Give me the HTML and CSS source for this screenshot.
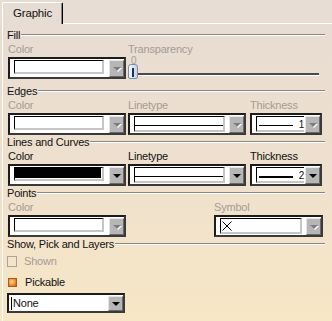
FILE: index.html
```html
<!DOCTYPE html>
<html lang="en">
<head>
    <meta charset="UTF-8">
    <title>Graphic</title>
    <link rel="stylesheet" href="styles.css">
</head>
<body>
<div class="tabs">
    <div class="tab">Graphic</div>
    <div class="tabrest"></div>
</div>
<div class="panel">
    <!-- Fill -->
    <div class="group fill">
        <div class="legend"><span>Fill</span><i></i></div>
        <div class="row">
            <div class="col w1">
                <div class="lbl off">Color</div>
                <div class="combo"><div class="field"></div><div class="btn dis"></div></div>
            </div>
            <div class="col wslide">
                <div class="lbl off">Transparency</div>
                <div class="zero">0</div>
                <div class="track"><div class="thumb"></div><div class="rail"></div></div>
            </div>
        </div>
    </div>
    <!-- Edges -->
    <div class="group">
        <div class="legend"><span>Edges</span><i></i></div>
        <div class="row">
            <div class="col w1">
                <div class="lbl off">Color</div>
                <div class="combo"><div class="field"></div><div class="btn dis"></div></div>
            </div>
            <div class="col w2">
                <div class="lbl off">Linetype</div>
                <div class="combo"><div class="field tall"><div class="ln"></div></div><div class="btn dis"></div></div>
            </div>
            <div class="col w3">
                <div class="lbl off">Thickness</div>
                <div class="combo"><div class="field tall thick"><div class="ln t"></div><span class="num">1</span></div><div class="btn dis"></div></div>
            </div>
        </div>
    </div>
    <!-- Lines and Curves -->
    <div class="group">
        <div class="legend"><span>Lines and Curves</span><i></i></div>
        <div class="row">
            <div class="col w1">
                <div class="lbl">Color</div>
                <div class="combo"><div class="field black"></div><div class="btn"></div></div>
            </div>
            <div class="col w2">
                <div class="lbl">Linetype</div>
                <div class="combo"><div class="field tall"><div class="ln"></div></div><div class="btn"></div></div>
            </div>
            <div class="col w3">
                <div class="lbl">Thickness</div>
                <div class="combo"><div class="field tall thick"><div class="ln t b"></div><span class="num">2</span></div><div class="btn"></div></div>
            </div>
        </div>
    </div>
    <!-- Points -->
    <div class="group">
        <div class="legend"><span>Points</span><i></i></div>
        <div class="row">
            <div class="col w1">
                <div class="lbl off">Color</div>
                <div class="combo"><div class="field"></div><div class="btn dis"></div></div>
            </div>
            <div class="col w4">
                <div class="lbl off">Symbol</div>
                <div class="combo"><div class="field tall">
                    <svg width="11" height="10" viewBox="0 0 11 10"><path d="M0.5 0.5 L9.5 9.5 M9.5 0.5 L0.5 9.5" stroke="#000" stroke-width="1" fill="none"/></svg>
                </div><div class="btn dis"></div></div>
            </div>
        </div>
    </div>
    <!-- Show, Pick and Layers -->
    <div class="group">
        <div class="legend"><span>Show, Pick and Layers</span><i></i></div>
        <div class="check off"><div class="box"></div>Shown</div>
        <div class="check pick"><div class="box on"></div>Pickable</div>
        <div class="combo sel"><div class="val"><span class="caret">None</span></div><div class="btn"></div></div>
    </div>
</div>
</body>
</html>
```
FILE: styles.css
```css
body{
    margin: 0;
    width: 332px;
    height: 321px;
    overflow: hidden;
    background: linear-gradient(#e7dcd4, #efe0cd 55%, #f7e7c6);
    font-family: "Liberation Sans", Arial, sans-serif;
    font-size: 11px;
    letter-spacing: -0.2px;
    color: #111;
}
.tabs{
    display: flex;
    align-items: flex-end;
    height: 24px;
}
.tab{
    margin-left: 2px;
    width: 61px;
    height: 22px;
    box-sizing: border-box;
    border-top: 1px solid #fff;
    border-left: 1px solid #fff;
    border-right: 1px solid #000;
    box-shadow: inset -1px 0 #8a8580;
    border-radius: 2px 2px 0 0;
    text-align: center;
    line-height: 21px;
    font-size: 11.5px;
}
.tabrest{
    flex: 1;
    border-bottom: 1px solid #fff;
}
.panel{
    margin-left: 2px;
    height: 297px;
    box-sizing: border-box;
    border-left: 1px solid #fff;
    padding: 5px 0 0 4px;
}
.group{
    padding-bottom: 1px;
}
.group.fill{
    padding-bottom: 6px;
}
.legend{
    display: flex;
    height: 12px;
    line-height: 12px;
}
.legend i{
    flex: 1;
    height: 0;
    margin: 5px 7px 0 1px;
    border-top: 1px solid #8a8784;
    border-bottom: 1px solid #fff;
}
.row{
    display: flex;
    margin-left: 1px;
}
.col{
    display: flex;
    flex-direction: column;
}
.lbl{
    height: 16px;
    line-height: 12px;
    padding-top: 2px;
    box-sizing: border-box;
}
.off{
    color: #a39c96;
}
.w1{ width: 118px; }
.w2{ width: 118px; margin-left: 2px; }
.w3{ width: 72px; margin-left: 4px; }
.w4{ width: 109px; margin-left: 88px; }
.wslide{ width: 191px; margin-left: 2px; }

.combo{
    display: flex;
    height: 22px;
    box-sizing: border-box;
    border: 2px solid #3a3a3a;
    border-top-color: #1c1c1c;
    border-left-color: #1c1c1c;
    background: #fff;
    padding: 1px 0 0 4px;
}
.field{
    flex: 1;
    min-width: 0;
    height: 14px;
    box-sizing: border-box;
    display: flex;
    align-items: center;
    margin-right: 5px;
    border-top: 1px solid #000;
    border-left: 1px solid #000;
    border-right: 2px solid #c6c6c6;
    border-bottom: 2px solid #c6c6c6;
    background: #fff;
}
.field.tall{
    height: 16px;
    margin-right: 4px;
}
.field.thick{
    margin-right: 1px;
    border-right: none;
}
.field.black{
    background: #000;
    box-shadow: inset -1px -1px #fff;
}
.btn{
    width: 15px;
    display: flex;
    align-items: center;
    justify-content: center;
    background: #b6b6b6;
    border: 1px solid;
    border-color: #e6e6e6 #6a6a6a #6a6a6a #e6e6e6;
    box-sizing: border-box;
}
.btn::before{
    content: "";
    border-left: 4px solid transparent;
    border-right: 4px solid transparent;
    border-top: 4px solid #000;
}
.btn.dis::before{
    border-top-color: #7c7c7c;
    filter: drop-shadow(1px 1px 0 #fff);
}
.ln{
    width: 89px;
    height: 1px;
    background: #000;
    flex-shrink: 0;
    margin: 4px 0 0 -1px;
}
.ln.t{
    width: 34px;
    margin-left: 2px;
}
.ln.b{
    height: 2px;
}
.num{
    margin-left: auto;
    line-height: 11px;
    font-size: 10px;
    margin-top: 1px;
}
.field svg{
    margin: 1px 0 0 1px;
}

.zero{
    height: 7px;
    line-height: 7px;
    font-size: 10px;
    padding-left: 3px;
    color: #a39c96;
}
.track{
    display: flex;
    height: 15px;
}
.thumb{
    width: 10px;
    height: 15px;
    box-sizing: border-box;
    border: 1px solid #7d8ea4;
    border-radius: 3px 3px 2px 2px;
    background: linear-gradient(90deg, #f6f8fb, #c3d2e2);
    display: flex;
    justify-content: center;
}
.thumb::after{
    content: "";
    width: 2px;
    margin: 3px 0 1px;
    background: #1e2f66;
}
.rail{
    flex: 1;
    height: 2px;
    margin-top: 9px;
    background: #4a4a4a;
    border-bottom: 1px solid #fff;
}

.check{
    display: flex;
    align-items: center;
    height: 12px;
    margin-top: 5px;
}
.check.pick{
    margin-top: 9px;
}
.box{
    width: 10px;
    height: 11px;
    box-sizing: border-box;
    border: 1px solid #aaa39c;
    margin-right: 7px;
}
.box.on{
    width: 9px;
    height: 9px;
    margin: 0 8px 0 1px;
    border: 1px solid #b25a12;
    background: radial-gradient(circle at 40% 40%, #fcd9a6, #ec8a2c 60%, #c2600e);
}
.combo.sel{
    width: 118px;
    height: 20px;
    margin-top: 5px;
    padding: 0 0 0 2px;
}
.val{
    flex: 1;
    display: flex;
    align-items: center;
    margin-right: 2px;
}
.caret{
    border-left: 1px solid #000;
    line-height: 13px;
    padding-left: 1px;
}
.combo.sel .btn{
    margin: 1px 0 0;
}
```
